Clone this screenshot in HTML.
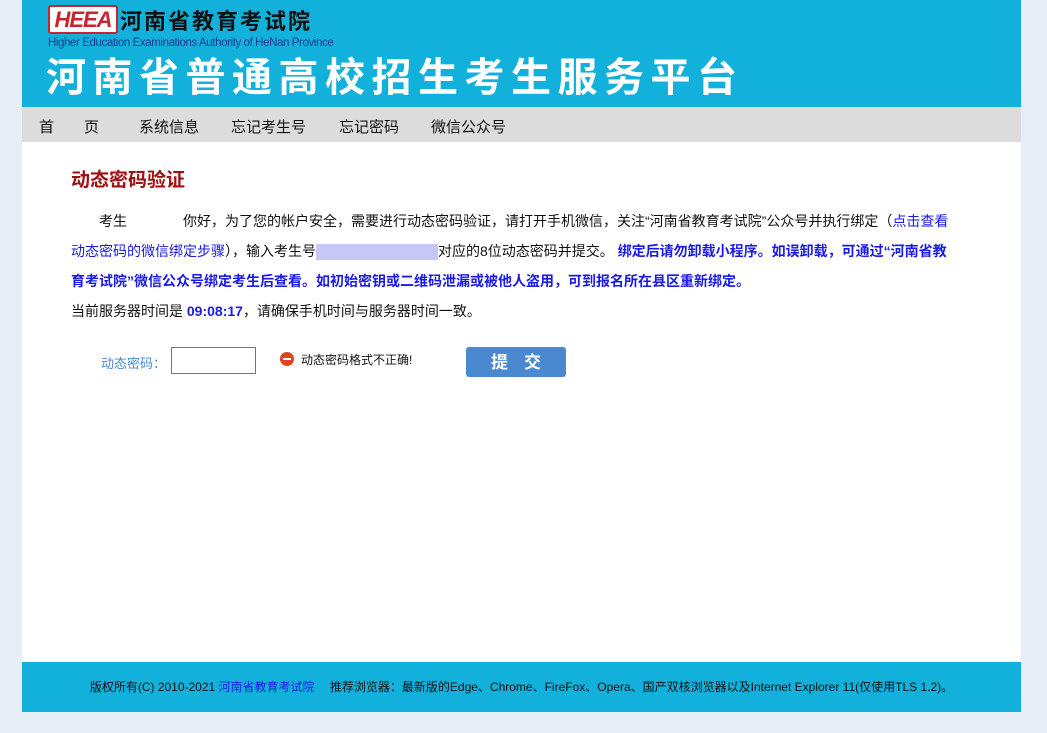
<!DOCTYPE html>
<html><head><meta charset="utf-8"><style>
*{margin:0;padding:0;box-sizing:border-box}
body{width:1047px;height:733px;background:#e6eef7;font-family:"Liberation Sans","Noto Sans CJK SC",sans-serif;position:relative;overflow:hidden}
.wrap{position:absolute;left:22px;top:0;width:999px;height:712px;background:#fff}
.hdr{position:absolute;left:0;top:0;width:999px;height:107px;background:#12b1dc}
.logo{position:absolute;left:26px;top:5px;width:70px;height:29px;background:#fff;border:2px solid #c8242d;border-radius:3px;color:#c8242d;font:italic bold 22px "Liberation Sans",sans-serif;line-height:25px;text-align:center;letter-spacing:-1px}
.org{position:absolute;left:98px;top:4px;font-size:22px;font-weight:bold;color:#111;letter-spacing:2px}
.en{position:absolute;left:26px;top:37px;font-size:11.5px;color:#1b3c8c;letter-spacing:-0.4px}
.title{position:absolute;left:24px;top:52px;font-size:40px;line-height:52px;color:#fff;font-weight:bold;letter-spacing:6.5px;white-space:nowrap}
.nav{position:absolute;left:0;top:107px;width:999px;height:35px;background:#dcdcdc;font-size:15px;color:#111}
.nav span{position:absolute;top:9px}
h2{position:absolute;left:49px;top:165px;font-size:19px;color:#a01010;font-weight:bold}
.p{position:absolute;left:49px;top:206px;width:882px;font-size:14px;line-height:30px;color:#111}
.b{color:#1a1ae6}.bb{color:#1a1ae6;font-weight:bold}
.blur{display:inline-block;width:122px;height:16px;background:#c5c8f5;vertical-align:middle}
.lbl{position:absolute;left:79px;top:353px;font-size:13px;color:#4a8ad0}
.inp{position:absolute;left:149px;top:347px;width:85px;height:27px;border:1px solid #777}
.err{position:absolute;left:258px;top:351px;font-size:12px;color:#111}
.err i{display:inline-block;width:14px;height:14px;border-radius:50%;background:#d42;vertical-align:-2px;margin-right:7px;position:relative}
.err i:after{content:"";position:absolute;left:3px;top:6px;width:8px;height:2px;background:#fff}
.btn{position:absolute;left:444px;top:347px;width:100px;height:30px;background:#4a89cf;border-radius:3px;color:#fff;font-size:17px;font-weight:bold;text-align:center;line-height:32px;letter-spacing:16px;text-indent:16px}
.ftr{position:absolute;left:0;top:662px;width:999px;height:50px;background:#12b1dc;font-size:12px;color:#111;text-align:center;line-height:50px}
</style></head><body>
<div class="wrap">
<div class="hdr">
<div class="logo">HEEA</div>
<div class="org">河南省教育考试院</div>
<div class="en">Higher Education Examinations Authority of HeNan Province</div>
<div class="title">河南省普通高校招生考生服务平台</div>
</div>
<div class="nav"><span style="left:17px">首　　页</span><span style="left:117px">系统信息</span><span style="left:209px">忘记考生号</span><span style="left:317px">忘记密码</span><span style="left:409px">微信公众号</span></div>
<h2>动态密码验证</h2>
<div class="p">　　考生　　　　你好，为了您的帐户安全，需要进行动态密码验证，请打开手机微信，关注“河南省教育考试院”公众号并执行绑定（<span class="b">点击查看动态密码的微信绑定步骤</span>），输入考生号<span class="blur"></span>对应的8位动态密码并提交。 <span class="bb">绑定后请勿卸载小程序。如误卸载，可通过“河南省教育考试院”微信公众号绑定考生后查看。如初始密钥或二维码泄漏或被他人盗用，可到报名所在县区重新绑定。</span><br>当前服务器时间是 <span class="bb">09:08:17</span>，请确保手机时间与服务器时间一致。</div>
<div class="lbl">动态密码：</div>
<div class="inp"></div>
<div class="err"><i></i>动态密码格式不正确!</div>
<div class="btn">提交</div>
<div class="ftr">版权所有(C) 2010-2021 <span class="b">河南省教育考试院</span>　 推荐浏览器：最新版的Edge、Chrome、FireFox、Opera、国产双核浏览器以及Internet Explorer 11(仅使用TLS 1.2)。</div>
</div>
</body></html>
